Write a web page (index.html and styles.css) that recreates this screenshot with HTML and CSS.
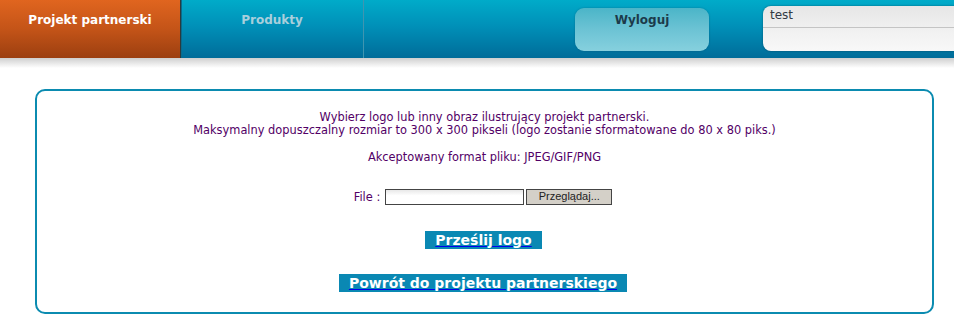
FILE: index.html
```html
<!DOCTYPE html>
<html lang="pl">
<head>
<meta charset="utf-8">
<title>Projekt partnerski</title>
<link rel="stylesheet" href="styles.css">
</head>
<body>
<div class="header">
  <div class="tab tab-active">Projekt partnerski</div>
  <div class="tab tab-normal">Produkty</div>
  <div class="header-spacer"></div>
  <div class="logout">Wyloguj</div>
  <div class="userbox">
    <div class="userbox-top">test</div>
    <div class="userbox-bottom"></div>
  </div>
</div>
<div class="header-shadow"></div>
<div class="panel">
  <p class="line">Wybierz logo lub inny obraz ilustrujący projekt partnerski.<br>Maksymalny dopuszczalny rozmiar to 300 x 300 pikseli (logo zostanie sformatowane do 80 x 80 piks.)</p>
  <p class="line formats">Akceptowany format pliku: JPEG/GIF/PNG</p>
  <div class="file-row">
    <span class="file-label">File :</span>
    <span class="file-input"></span>
    <span class="file-btn">Przeglądaj...</span>
  </div>
  <div class="btn-row btn-row-upload"><a class="btn" href="#">Prześlij logo</a></div>
  <div class="btn-row btn-row-back"><a class="btn" href="#">Powrót do projektu partnerskiego</a></div>
</div>
</body>
</html>
```
FILE: styles.css
```css
html, body {
  margin: 0;
  padding: 0;
  background: #ffffff;
  font-family: "DejaVu Sans", Verdana, sans-serif;
}
.header {
  display: flex;
  align-items: flex-start;
  height: 58px;
  background: linear-gradient(#00abc9, #0090b8 45%, #006c99);
  overflow: hidden;
}
.tab {
  width: 181px;
  height: 58px;
  box-sizing: border-box;
  padding-top: 13px;
  text-align: center;
  font-size: 12px;
  font-weight: bold;
  flex: none;
}
.tab-active {
  background: linear-gradient(#e0651f, #c45418 50%, #9c3f10);
  color: #ffffff;
  border-right: 1px solid #2b3a3e;
}
.tab-normal {
  width: 183px;
  color: #a9cfdc;
  border-right: 1px solid #3f95b0;
  box-shadow: inset 1px 0 0 #0a6c8c;
}
.header-spacer {
  width: 211px;
  flex: none;
}
.logout {
  width: 134px;
  height: 43px;
  margin-top: 8px;
  box-sizing: border-box;
  border-radius: 9px;
  background: linear-gradient(#4bb5c8, #6cc3d4 50%, #86d0de);
  box-shadow: 0 0 2px rgba(0, 60, 90, 0.4);
  text-align: center;
  padding-top: 5px;
  font-size: 12px;
  font-weight: bold;
  color: #1c3a4a;
  flex: none;
}
.userbox {
  margin-left: 54px;
  margin-top: 6px;
  width: 220px;
  height: 45px;
  border-radius: 8px;
  background: linear-gradient(#e6e6e6, #f0f0f0 50%, #f8f8f8);
  box-shadow: 0 0 2px rgba(0, 40, 60, 0.6);
  flex: none;
  display: flex;
  flex-direction: column;
}
.userbox-top {
  height: 22px;
  box-sizing: border-box;
  padding: 2px 0 0 7px;
  font-size: 12px;
  color: #333a44;
  border-bottom: 1px solid #c4c4c4;
}
.header-shadow {
  height: 10px;
  background: linear-gradient(#cfcfcf, #ffffff);
}
.panel {
  margin: 21px 0 0 35px;
  width: 899px;
  height: 225px;
  box-sizing: border-box;
  border: 2px solid #0b8bb0;
  border-radius: 10px;
  text-align: center;
  color: #520066;
  font-size: 11.4px;
  padding-top: 20px;
}
.line {
  margin: 0;
  line-height: 13px;
}
.formats {
  margin-top: 14px;
}
.file-row {
  margin-top: 24px;
  display: flex;
  justify-content: center;
  align-items: center;
  height: 18px;
  padding-right: 3px;
}
.file-label {
  margin-right: 5px;
}
.file-input {
  width: 137px;
  height: 14px;
  border: 1px solid #444;
  background: linear-gradient(#e8e8e8, #ffffff 40%);
}
.file-btn {
  margin-left: 2px;
  width: 84px;
  height: 14px;
  border: 1px solid #444;
  background: #d4d0c8;
  color: #222;
  font-family: "Liberation Sans", Arial, sans-serif;
  font-size: 11px;
  line-height: 13px;
}
.btn-row {
  display: flex;
  justify-content: center;
}
.btn-row-upload {
  margin-top: 25px;
  padding-right: 2px;
}
.btn-row-back {
  margin-top: 25px;
  padding-right: 3px;
}
.btn {
  display: block;
  background: #0a88b3;
  color: #ffffff;
  font-size: 14px;
  font-weight: bold;
  line-height: 18px;
  padding: 0 10px;
  text-decoration: underline;
  text-decoration-color: #0000ee;
  text-decoration-thickness: 1px;
  text-underline-offset: 1px;
}
```
